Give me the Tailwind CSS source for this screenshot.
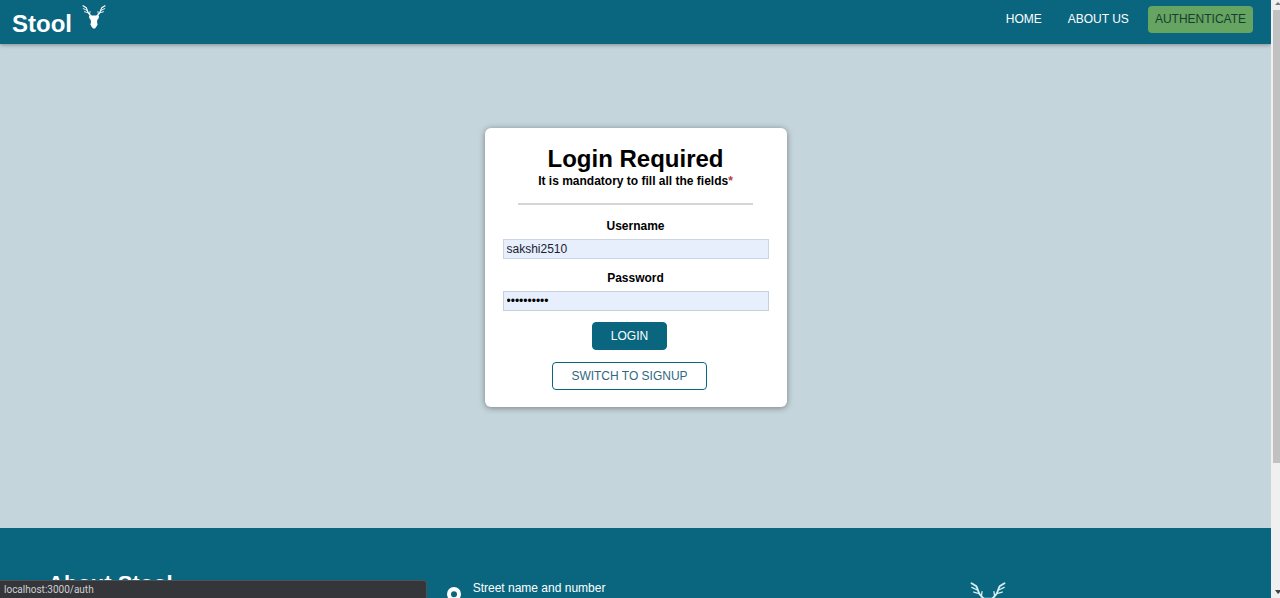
<!DOCTYPE html>
<html lang="en">
<head>
<meta charset="utf-8">
<title>Stool</title>
<script src="https://cdn.jsdelivr.net/npm/@tailwindcss/browser@4"></script>
</head>
<body class="flex h-screen overflow-hidden bg-[#c5d5dc] font-['Liberation_Sans',Arial,sans-serif] text-xs leading-4 text-black">
<svg class="hidden">
  <symbol id="deer" viewBox="0 0 24 26">
    <g fill="none" stroke="currentColor" stroke-width="0.9" stroke-linecap="round">
      <path stroke-width="1.2" d="M9.500 12.500L7 9.800C5.500 8.500 5.500 6 4.200 3.800L1 1.800"/>
      <path d="M5.200 6.500L1.200 4.600M6.200 8.800L2.500 7.700M7.600 10.500L8 7.500"/>
      <path stroke-width="1.2" d="M14.500 12.500L17 9.800C18.500 8.500 18.500 6 19.800 3.800L23 1.800"/>
      <path d="M18.800 6.500L22.800 4.600M17.800 8.800L21.500 7.700M16.400 10.500L16 7.500"/>
    </g>
    <path fill="currentColor" d="M7 11.500H17L16.800 14L15.300 16L15 18L15.600 20.500L14.500 22.500L13 24.500H11L9.500 22.500L8.400 20.500L9 18L8.700 16L7.200 14Z"/>
  </symbol>
</svg>
<div class="flex min-w-0 flex-1 flex-col overflow-hidden">
  <header class="z-10 flex h-11 shrink-0 items-start justify-between bg-[#0a667f] pl-3 pr-[18px] text-white shadow-[0_1px_4px_rgba(0,0,0,0.35)]">
    <a href="#" class="flex items-start gap-2.5 text-2xl font-bold">
      <span class="pt-2 leading-8">Stool</span>
      <svg class="mt-1 h-[26px] w-6"><use href="#deer"/></svg>
    </a>
    <nav class="flex items-start pt-1.5">
      <a href="#" class="px-[13px] pt-[5px] pb-1.5">HOME</a>
      <a href="#" class="px-[13px] pt-[5px] pb-1.5">ABOUT US</a>
      <a href="#" class="ml-1.5 rounded bg-[#66a461] px-[7px] pt-[5px] pb-1.5 text-[#173d32]">AUTHENTICATE</a>
    </nav>
  </header>
  <main class="flex h-[484px] shrink-0 items-start justify-center pt-21">
    <form class="flex w-[302px] flex-col items-center rounded-md bg-white px-[18px] py-[17px] shadow-[0_1px_6px_rgba(0,0,0,0.4)]">
      <h1 class="text-2xl leading-7 font-bold">Login Required</h1>
      <p class="font-bold">It is mandatory to fill all the fields<span class="text-[#b0404a]">*</span></p>
      <hr class="mt-3.5 w-[235px] border-t-2 border-[#d3d5d7]">
      <label for="username" class="mt-[13px] font-bold">Username</label>
      <input id="username" type="text" value="sakshi2510" class="mt-[5px] h-5 w-full border border-[#ccd5e3] bg-[#e8effc] px-[3px] text-[#1b2030]">
      <label for="password" class="mt-[11px] font-bold">Password</label>
      <input id="password" type="password" value="password10" class="mt-[5px] h-5 w-full border border-[#c6d0dc] bg-[#e8effc] px-[3px] text-black">
      <button type="submit" class="mt-[11px] mr-3 h-7 rounded border border-[#0a667f] bg-[#0a667f] px-[18px] text-white">LOGIN</button>
      <button type="button" class="mt-3 mr-3 h-7 rounded border border-[#0a667f] bg-white px-[18px] text-[#306880]">SWITCH TO SIGNUP</button>
    </form>
  </main>
  <footer class="grid h-[260px] shrink-0 grid-cols-3 bg-[#0a667f] text-white">
    <h2 class="pt-10 pl-12 text-[22px] leading-8 font-bold">About Stool</h2>
    <address class="flex items-start gap-3 pt-13 pl-[23px] not-italic">
      <svg class="mt-[7px] h-5 w-[14px]" viewBox="0 0 14 20"><path fill="currentColor" fill-rule="evenodd" d="M7 0a7 7 0 0 1 7 7c0 5-7 13-7 13S0 12 0 7a7 7 0 0 1 7-7ZM7 4.200a3 3 0 1 0 0 6a3 3 0 0 0 0-6Z"/></svg>
      <span>Street name and number</span>
    </address>
    <svg class="mt-13 ml-[123px] h-10 w-9 text-[#d5eef2]"><use href="#deer"/></svg>
  </footer>
</div>
<div class="flex w-[9px] shrink-0 flex-col items-end justify-between bg-[#f0f0f0]" aria-hidden="true">
  <svg class="h-2.5 w-[7px] shrink-0" viewBox="0 0 7 10"><path fill="#777" d="M2 5L5 2L7 4V5Z"/></svg>
  <div class="h-[453px] w-[7px] shrink-0 bg-[#c1c1c1]"></div>
  <div class="flex-1"></div>
  <svg class="h-2.5 w-[7px] shrink-0" viewBox="0 0 7 10"><path fill="#444" d="M2 2H7V4L5 6Z"/></svg>
</div>
<div class="absolute bottom-0 left-0 z-20 h-[18px] w-[427px] rounded-tr-sm border-t border-r border-[#4b5258] bg-[#35363a] pl-1 font-[Roboto,sans-serif] text-[10px] leading-[17px] text-[#cfd0d3]">localhost:3000/auth</div>
</body>
</html>
